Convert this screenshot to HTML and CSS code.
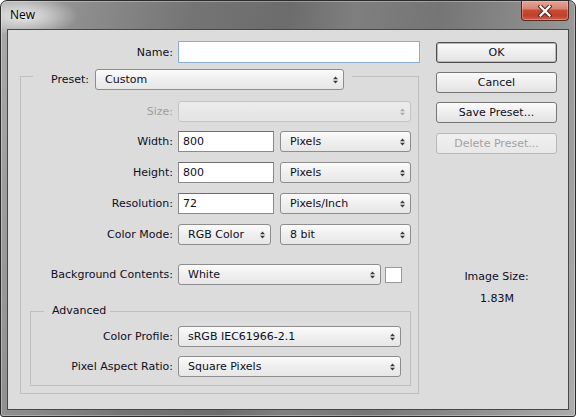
FILE: index.html
```html
<!DOCTYPE html>
<html>
<head>
<meta charset="utf-8">
<title>New</title>
<link rel="stylesheet" href="styles.css">
</head>
<body>
<div class="window">
  <div class="titlebar">
    <span class="title">New</span>
    <div class="close">
      <svg width="14" height="12" viewBox="0 0 14 12"><path class="x-out" d="M2.5 1.5L11.5 10.5M11.5 1.5L2.5 10.5"/><path class="x-in" d="M2.5 1.5L11.5 10.5M11.5 1.5L2.5 10.5"/></svg>
    </div>
  </div>
  <div class="client">
    <div class="form">
      <div class="row name-row">
        <span class="lbl lbl-main">Name:</span>
        <div class="input name-field focused"></div>
      </div>
      <fieldset class="group preset-group">
        <legend class="preset-legend">
          <span class="lbl-preset">Preset:</span>
          <div class="select w-preset"><span>Custom</span><svg class="arr" width="5" height="8" viewBox="0 0 5 8"><path d="M0 3.2h5L2.5 0.4z M0 4.8h5L2.5 7.6z"/></svg></div>
        </legend>
        <div class="rows">
          <div class="row first-row">
            <span class="lbl lbl-in disabled">Size:</span>
            <div class="select w-size is-disabled"><span></span><svg class="arr" width="5" height="8" viewBox="0 0 5 8"><path d="M0 3.2h5L2.5 0.4z M0 4.8h5L2.5 7.6z"/></svg></div>
          </div>
          <div class="row">
            <span class="lbl lbl-in">Width:</span>
            <div class="input w-num">800</div>
            <div class="select w-unit"><span>Pixels</span><svg class="arr" width="5" height="8" viewBox="0 0 5 8"><path d="M0 3.2h5L2.5 0.4z M0 4.8h5L2.5 7.6z"/></svg></div>
          </div>
          <div class="row">
            <span class="lbl lbl-in">Height:</span>
            <div class="input w-num">800</div>
            <div class="select w-unit"><span>Pixels</span><svg class="arr" width="5" height="8" viewBox="0 0 5 8"><path d="M0 3.2h5L2.5 0.4z M0 4.8h5L2.5 7.6z"/></svg></div>
          </div>
          <div class="row">
            <span class="lbl lbl-in">Resolution:</span>
            <div class="input w-num">72</div>
            <div class="select w-unit"><span>Pixels/Inch</span><svg class="arr" width="5" height="8" viewBox="0 0 5 8"><path d="M0 3.2h5L2.5 0.4z M0 4.8h5L2.5 7.6z"/></svg></div>
          </div>
          <div class="row">
            <span class="lbl lbl-in">Color Mode:</span>
            <div class="select w-mode"><span>RGB Color</span><svg class="arr" width="5" height="8" viewBox="0 0 5 8"><path d="M0 3.2h5L2.5 0.4z M0 4.8h5L2.5 7.6z"/></svg></div>
            <div class="select w-bit"><span>8 bit</span><svg class="arr" width="5" height="8" viewBox="0 0 5 8"><path d="M0 3.2h5L2.5 0.4z M0 4.8h5L2.5 7.6z"/></svg></div>
          </div>
          <div class="row bg-row">
            <span class="lbl lbl-in">Background Contents:</span>
            <div class="select w-bg"><span>White</span><svg class="arr" width="5" height="8" viewBox="0 0 5 8"><path d="M0 3.2h5L2.5 0.4z M0 4.8h5L2.5 7.6z"/></svg></div>
            <div class="swatch"></div>
          </div>
        </div>
        <fieldset class="group adv-group">
          <legend class="adv-legend">Advanced</legend>
          <div class="rows adv-rows">
            <div class="row adv-first">
              <span class="lbl lbl-adv">Color Profile:</span>
              <div class="select w-adv"><span>sRGB IEC61966-2.1</span><svg class="arr" width="5" height="8" viewBox="0 0 5 8"><path d="M0 3.2h5L2.5 0.4z M0 4.8h5L2.5 7.6z"/></svg></div>
            </div>
            <div class="row">
              <span class="lbl lbl-adv">Pixel Aspect Ratio:</span>
              <div class="select w-adv"><span>Square Pixels</span><svg class="arr" width="5" height="8" viewBox="0 0 5 8"><path d="M0 3.2h5L2.5 0.4z M0 4.8h5L2.5 7.6z"/></svg></div>
            </div>
          </div>
        </fieldset>
      </fieldset>
    </div>
    <div class="side">
      <div class="btn btn-default">OK</div>
      <div class="btn">Cancel</div>
      <div class="btn">Save Preset...</div>
      <div class="btn btn-disabled">Delete Preset...</div>
      <div class="size-info">
        <div class="size-line">Image Size:</div>
        <div class="size-line size-val">1.83M</div>
      </div>
    </div>
  </div>
</div>
</body>
</html>
```
FILE: styles.css
```css
html, body {
  margin: 0;
  padding: 0;
}
body {
  font-family: "DejaVu Sans", Verdana, sans-serif;
  font-size: 11px;
  color: #0e0e24;
  background: #ffffff;
}
.window {
  width: 576px;
  height: 417px;
  box-sizing: border-box;
  border: 1px solid #2c2c2c;
  border-radius: 7px 7px 3px 3px;
  padding: 0 6px 6px 6px;
  display: flex;
  flex-direction: column;
  box-shadow: inset 0 0 0 1px rgba(255,255,255,0.3);
  background:
    radial-gradient(55px 20px at 22px 15px, rgba(238,238,238,0.95), rgba(238,238,238,0)),
    linear-gradient(100deg, #ababab 0%, #8f8f8f 12%, #747474 30%, #6c6c6c 45%, #7f7f7f 55%, #757575 68%, #8b8b8b 82%, #adadad 100%);
}
.titlebar {
  height: 28px;
  display: flex;
  justify-content: space-between;
  align-items: flex-start;
}
.title {
  font-family: "Open Sans", "Noto Sans", sans-serif;
  font-size: 12px;
  line-height: 16px;
  padding: 6px 0 0 3px;
  color: #000;
}
.close {
  width: 48px;
  height: 20px;
  box-sizing: border-box;
  border: 1px solid #5a2a22;
  border-top: none;
  border-radius: 0 0 4px 4px;
  background: linear-gradient(#e3a597 0%, #d88573 40%, #c74a33 50%, #c1402a 78%, #d06450 100%);
  box-shadow: inset 0 0 0 1px rgba(255,210,200,0.35);
  display: flex;
  align-items: center;
  justify-content: center;
}
.x-out {
  stroke: #4a2a26;
  stroke-width: 4.2;
  stroke-linecap: square;
  fill: none;
}
.x-in {
  stroke: #ffffff;
  stroke-width: 2.2;
  stroke-linecap: square;
  fill: none;
}
.client {
  flex: 1;
  border: 1px solid #474747;
  background: #dcdcdc;
  display: flex;
  padding: 11px 0 0 12px;
}
.form {
  width: 409px;
  display: flex;
  flex-direction: column;
}
.row {
  display: flex;
  align-items: center;
  height: 21px;
  gap: 5px;
}
.lbl {
  text-align: right;
  white-space: nowrap;
  flex: none;
}
.lbl-main { width: 153px; }
.lbl-in { width: 152px; }
.lbl-adv { width: 142px; }
.disabled { color: #9e9e9e; }
.name-row { height: 22px; }
.input {
  box-sizing: border-box;
  height: 21px;
  border: 1px solid #8a8a8a;
  border-top-color: #6e6e6e;
  background: #ffffff;
  padding-left: 4px;
  line-height: 19px;
  flex: none;
}
.name-field {
  width: 242px;
  height: 22px;
}
.focused {
  border-color: #8aaed6;
}
.group {
  margin: 0;
  padding: 0;
  min-width: 0;
  border: 1px solid #bfbfbf;
  box-sizing: border-box;
}
.preset-group {
  width: 399px;
}
.preset-legend {
  margin-left: 12px;
  padding: 6px 8px 0 18px;
  display: flex;
  align-items: center;
  gap: 6px;
}
.select {
  box-sizing: border-box;
  height: 21px;
  border: 1px solid #8d8d8d;
  border-radius: 3px;
  background: linear-gradient(#fbfbfb, #efefef 50%, #e7e7e7);
  display: flex;
  align-items: center;
  justify-content: space-between;
  padding: 0 5px 0 9px;
  white-space: nowrap;
  flex: none;
}
.arr path { fill: #3b3b3b; }
.is-disabled {
  border-color: #c4c4c4;
  background: linear-gradient(#ececec, #e4e4e4);
}
.is-disabled .arr path { fill: #a9a9a9; }
.w-preset { width: 249px; }
.w-size { width: 233px; }
.w-num { width: 96px; }
.w-unit { width: 131px; margin-left: 1px; }
.w-mode { width: 93px; }
.w-bit { width: 131px; margin-left: 4px; }
.w-bg { width: 203px; }
.w-adv { width: 223px; }
.rows {
  display: flex;
  flex-direction: column;
  gap: 10px;
  padding-top: 11px;
}
.first-row { margin-bottom: -1px; }
.bg-row { margin-top: 9px; }
.swatch {
  width: 17px;
  height: 16px;
  box-sizing: border-box;
  border: 1px solid #9a9a9a;
  background: #ffffff;
  margin-left: -1px;
}
.adv-group {
  margin: 19px 7px 7px 9px;
  padding: 0 0 8px 0;
}
.adv-legend {
  margin-left: 13px;
  padding: 0 4px 0 8px;
  line-height: 14px;
}
.adv-rows {
  padding-top: 8px;
  gap: 9px;
}
.side {
  margin-left: 7px;
  width: 121px;
  display: flex;
  flex-direction: column;
  gap: 9px;
  padding-top: 1px;
}
.btn {
  box-sizing: border-box;
  height: 21px;
  border: 1px solid #767676;
  border-radius: 3px;
  background: linear-gradient(#fbfbfb, #eeeeee 50%, #e3e3e3);
  text-align: center;
  line-height: 19px;
}
.btn-default {
  border-color: #4d4d4d;
  box-shadow: inset 0 0 0 1px #b9b9b9;
}
.btn-disabled {
  border-color: #b8b8b8;
  background: linear-gradient(#f0f0f0, #e8e8e8);
  color: #a2a2a2;
  margin-top: 1px;
}
.size-info {
  margin-top: 107px;
  display: flex;
  flex-direction: column;
  gap: 8px;
  align-items: center;
}
.size-line {
  line-height: 14px;
}
.size-val {
  margin-left: 1px;
}
```
